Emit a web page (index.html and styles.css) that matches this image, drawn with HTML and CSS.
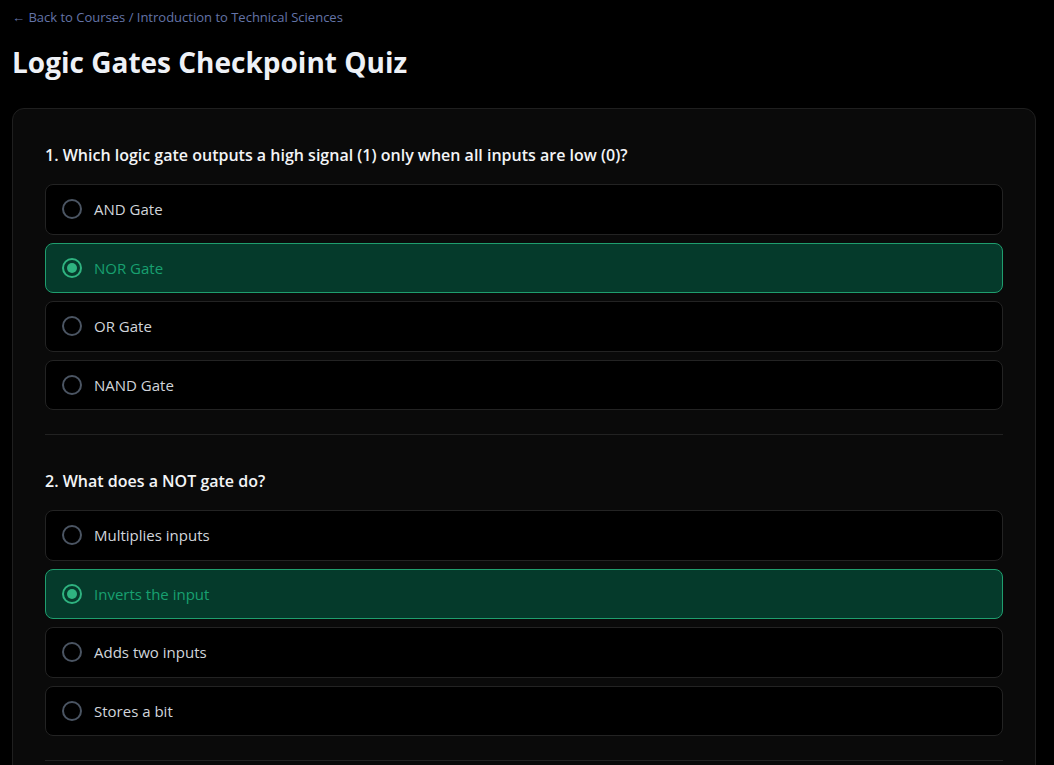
FILE: index.html
```
<!DOCTYPE html>
<html lang="en">
<head>
<meta charset="utf-8">
<title>Logic Gates Checkpoint Quiz</title>
<link rel="stylesheet" href="styles.css">
</head>
<body>
<div class="page">
  <nav class="crumbs">← Back to Courses / Introduction to Technical Sciences</nav>
  <h1 class="title">Logic Gates Checkpoint Quiz</h1>
  <section class="card">
    <div class="question">
      <h2 class="q-text">1. Which logic gate outputs a high signal (1) only when all inputs are low (0)?</h2>
      <div class="options">
        <label class="option"><span class="radio"></span><span class="opt-text">AND Gate</span></label>
        <label class="option selected"><span class="radio"></span><span class="opt-text">NOR Gate</span></label>
        <label class="option"><span class="radio"></span><span class="opt-text">OR Gate</span></label>
        <label class="option"><span class="radio"></span><span class="opt-text">NAND Gate</span></label>
      </div>
    </div>
    <div class="question">
      <h2 class="q-text">2. What does a NOT gate do?</h2>
      <div class="options">
        <label class="option"><span class="radio"></span><span class="opt-text">Multiplies inputs</span></label>
        <label class="option selected"><span class="radio"></span><span class="opt-text">Inverts the input</span></label>
        <label class="option"><span class="radio"></span><span class="opt-text">Adds two inputs</span></label>
        <label class="option"><span class="radio"></span><span class="opt-text">Stores a bit</span></label>
      </div>
    </div>
  </section>
</div>
</body>
</html>
```
FILE: styles.css
```
html, body {
  margin: 0;
  padding: 0;
  background: #000;
}
body {
  font-family: "Open Sans", "Noto Sans", sans-serif;
  color: #d1d5db;
}
.page {
  padding: 6px 18px 0 12px;
}
.crumbs {
  font-size: 13px;
  line-height: 22px;
  color: #6474a8;
}
.title {
  margin: 16px 0 0;
  font-size: 28px;
  line-height: 36px;
  font-weight: 700;
  color: #eef1f6;
}
.card {
  margin-top: 28px;
  background: #0a0a0a;
  border: 1px solid #1f1f1f;
  border-radius: 12px;
  padding: 34px 32px 0;
}
.question {
  padding-bottom: 24px;
  border-bottom: 1px solid #222;
  margin-bottom: 34px;
}
.q-text {
  margin: 0 0 17px;
  font-size: 16px;
  line-height: 24px;
  font-weight: 600;
  color: #f3f4f6;
}
.options {
  display: flex;
  flex-direction: column;
  gap: 8px;
}
.option {
  display: flex;
  align-items: center;
  gap: 12px;
  padding: 12px 16px;
  background: #000;
  border: 1px solid #232323;
  border-radius: 8px;
}
.radio {
  box-sizing: border-box;
  width: 20px;
  height: 20px;
  border-radius: 50%;
  border: 2px solid #4b5563;
  display: flex;
  align-items: center;
  justify-content: center;
  flex: none;
}
.opt-text {
  font-size: 15px;
  line-height: 24.5px;
  color: #d1d5db;
}
.option.selected {
  background: #053a2b;
  border-color: #1f9e6e;
}
.option.selected .radio {
  border-color: #2fb380;
}
.option.selected .radio::after {
  content: "";
  width: 10px;
  height: 10px;
  border-radius: 50%;
  background: #2fb380;
}
.option.selected .opt-text {
  color: #18a070;
}
```
